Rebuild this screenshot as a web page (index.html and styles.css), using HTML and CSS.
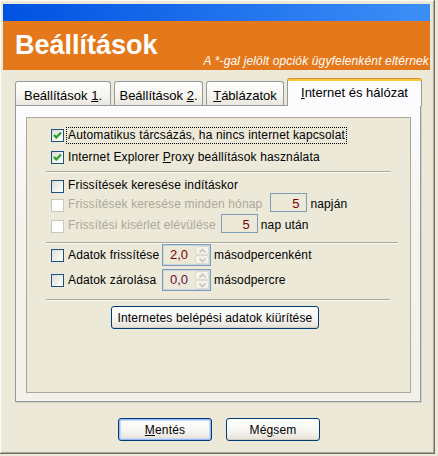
FILE: index.html
```html
<!DOCTYPE html>
<html lang="hu">
<head>
<meta charset="utf-8">
<title>Beállítások</title>
<link rel="stylesheet" href="styles.css">
</head>
<body>
<div class="window">
  <div class="titlebar"></div>
  <div class="header">
    <div class="title">Beállítások</div>
    <div class="subtitle">A *-gal jelölt opciók ügyfelenként eltérnek</div>
  </div>
  <div class="tabs">
    <div class="tab tab1">Beállítások <u>1</u>.</div>
    <div class="tab tab2">Beállítások <u>2</u>.</div>
    <div class="tab tab3"><u>T</u>áblázatok</div>
    <div class="tab active"><u>I</u>nternet és hálózat</div>
  </div>
  <div class="page">
    <div class="inner">
      <div class="row r1">
        <span class="cb"><svg width="11" height="11" viewBox="0 0 11 11"><polyline points="2,5 4.3,7.5 9,2.5" fill="none" stroke="#21a121" stroke-width="2.2"/></svg></span>
        <span class="label focus">Automatikus tárcsázás, ha nincs internet kapcsolat</span>
      </div>
      <div class="row r2">
        <span class="cb"><svg width="11" height="11" viewBox="0 0 11 11"><polyline points="2,5 4.3,7.5 9,2.5" fill="none" stroke="#21a121" stroke-width="2.2"/></svg></span>
        <span class="label">Internet Explorer <u>P</u>roxy beállítások használata</span>
      </div>
      <div class="sep s1"></div>
      <div class="row r3">
        <span class="cb"></span>
        <span class="label">Frissítések keresése indításkor</span>
      </div>
      <div class="row r4">
        <span class="cb disabled"></span>
        <span class="label dis">Frissítések keresése minden hónap</span>
        <span class="numbox nb1">5</span>
        <span class="after">napján</span>
      </div>
      <div class="row r5">
        <span class="cb disabled"></span>
        <span class="label dis">Frissítési kisérlet elévülése</span>
        <span class="numbox nb2">5</span>
        <span class="after">nap után</span>
      </div>
      <div class="sep s2"></div>
      <div class="row r6">
        <span class="cb"></span>
        <span class="label fixed">Adatok frissítése</span>
        <span class="spin"><span class="val">2,0</span><span class="arrows"><span class="arr"><svg width="9" height="6" viewBox="0 0 9 6"><polyline points="1.5,4.5 4.5,1.5 7.5,4.5" fill="none" stroke="#c9c6b8" stroke-width="1.6"/></svg></span><span class="arr"><svg width="9" height="6" viewBox="0 0 9 6"><polyline points="1.5,1.5 4.5,4.5 7.5,1.5" fill="none" stroke="#c9c6b8" stroke-width="1.6"/></svg></span></span></span>
        <span class="after">másodpercenként</span>
      </div>
      <div class="row r7">
        <span class="cb"></span>
        <span class="label fixed">Adatok zárolása</span>
        <span class="spin"><span class="val v2">0,0</span><span class="arrows"><span class="arr"><svg width="9" height="6" viewBox="0 0 9 6"><polyline points="1.5,4.5 4.5,1.5 7.5,4.5" fill="none" stroke="#c9c6b8" stroke-width="1.6"/></svg></span><span class="arr"><svg width="9" height="6" viewBox="0 0 9 6"><polyline points="1.5,1.5 4.5,4.5 7.5,1.5" fill="none" stroke="#c9c6b8" stroke-width="1.6"/></svg></span></span></span>
        <span class="after">másodpercre</span>
      </div>
      <div class="sep s3"></div>
      <div class="btnrow">
        <button class="btn wide">Internetes belépési adatok kiürítése</button>
      </div>
    </div>
  </div>
  <div class="buttons">
    <button class="btn dlg default"><u>M</u>entés</button>
    <button class="btn dlg">Mé<u>g</u>sem</button>
  </div>
</div>
</body>
</html>
```
FILE: styles.css
```css
html, body {
  margin: 0;
  padding: 0;
}
body {
  width: 438px;
  height: 456px;
  overflow: hidden;
  background: #ece9d8;
  font-family: "Liberation Sans", Arial, sans-serif;
  font-size: 12px;
  color: #000;
}
.window {
  width: 435px;
  height: 454px;
  box-sizing: border-box;
  padding: 4px 4px 0 3px;
  background: #ece9d8;
  border-right: 1px solid #716f64;
  border-bottom: 1px solid #716f64;
  box-shadow: inset 1px 1px 0 #fbfaf6, inset -1px -1px 0 #aca899;
}
.titlebar {
  height: 17px;
  background: linear-gradient(to right, #0052e2, #3d8ff7);
}
.header {
  height: 49px;
  box-sizing: border-box;
  padding: 14px 1px 0 12px;
  background: #e5781a;
  color: #fff;
}
.title {
  font-size: 27px;
  font-weight: bold;
  line-height: 20px;
}
.subtitle {
  font-size: 12px;
  font-style: italic;
  line-height: 12px;
  letter-spacing: 0.15px;
  text-align: right;
}
.tabs {
  display: flex;
  align-items: flex-end;
  gap: 3px;
  height: 27px;
  margin-top: 8px;
  padding-left: 12px;
}
.tab {
  box-sizing: border-box;
  height: 24px;
  padding-top: 4px;
  font-size: 13px;
  line-height: 19px;
  text-align: center;
  white-space: nowrap;
  border: 1px solid #919b9c;
  border-bottom: none;
  border-radius: 3px 3px 0 0;
  background: linear-gradient(#fefefe, #f7f6f1 55%, #e9e7de);
}
.tab1 { width: 96px; }
.tab2 { width: 89px; }
.tab3 { width: 78px; }
.tab.active {
  position: relative;
  z-index: 1;
  width: 135px;
  height: 27px;
  margin-bottom: -1px;
  padding-top: 2px;
  border-top: 2px solid #ffc73c;
  box-shadow: 0 -1px 0 #e68b2c;
  background: #fcfcfe;
}
.page {
  width: 406px;
  height: 297px;
  margin-left: 12px;
  box-sizing: border-box;
  padding: 11px 9px 8px 10px;
  border: 1px solid #919b9c;
  background: linear-gradient(#fcfcfe, #f4f3ee 40%, #f2f1ec);
  box-shadow: 1px 1px 0 #d4d2c6;
}
.inner {
  width: 385px;
  height: 276px;
  box-sizing: border-box;
  border: 1px solid #aca899;
  background: #ece9d8;
}
.row {
  display: flex;
  align-items: center;
  padding-left: 24px;
  white-space: nowrap;
}
.r1 { margin-top: 6px; height: 22px; }
.r2 { height: 22px; }
.r3 { margin-top: 4px; height: 16px; align-items: flex-end; }
.r4 { height: 19px; align-items: flex-end; }
.r5 { margin-top: 2px; height: 19px; align-items: flex-end; }
.r6 { height: 22px; }
.r7 { margin-top: 3px; height: 22px; }
.cb {
  flex: none;
  width: 13px;
  height: 13px;
  box-sizing: border-box;
  border: 1px solid #1c5180;
  background: linear-gradient(135deg, #dcdcd5, #f6f6f3 70%, #fff);
  display: flex;
  align-items: center;
  justify-content: center;
}
.cb.disabled {
  border-color: #cac8bb;
  background: #fff;
}
.label {
  margin-left: 4px;
  line-height: 15px;
  letter-spacing: 0.15px;
}
.label.focus {
  margin-left: 2px;
  padding: 0 1px;
  border: 1px dotted #000;
}
.label.dis {
  color: #aca899;
}
.label.fixed {
  width: 94px;
}
.after {
  margin-left: 3px;
  line-height: 15px;
  letter-spacing: 0.15px;
}
.numbox {
  width: 37px;
  height: 19px;
  margin-left: 6px;
  box-sizing: border-box;
  border: 1px solid #7f9db9;
  background: #ece9d8;
  color: #800000;
  text-align: right;
  padding-right: 7px;
  line-height: 19px;
  font-size: 13px;
}
.nb1 { margin-left: 8px; }
.nb2 { margin-left: 5px; }
.sep {
  height: 0;
  margin-left: 19px;
  border-top: 1px solid #aca899;
  border-bottom: 1px solid #fbfaf5;
}
.s1 { margin-top: 3px; width: 345px; }
.s2 { margin-top: 9px; width: 352px; }
.s3 { margin-top: 8px; width: 344px; }
.spin {
  display: flex;
  width: 49px;
  height: 22px;
  box-sizing: border-box;
  border: 1px solid #7f9db9;
  box-shadow: inset 0 0 0 1px #c6d3e0;
  background: #ece9d8;
  padding: 1px;
}
.spin .val {
  flex: 1;
  text-align: right;
  padding-right: 7px;
  line-height: 18px;
  font-size: 13px;
  color: #800000;
}
.spin .val.v2 { color: #6a0c38; }
.arrows {
  display: flex;
  flex-direction: column;
  width: 14px;
}
.arr {
  flex: 1;
  display: flex;
  align-items: center;
  justify-content: center;
  border: 1px solid #dedbd0;
  border-radius: 2px;
  background: #f3f2ec;
}
.btnrow {
  margin-top: 5px;
  padding-left: 84px;
}
.btn {
  box-sizing: border-box;
  height: 23px;
  padding: 0;
  font-family: "Liberation Sans", Arial, sans-serif;
  font-size: 12px;
  letter-spacing: 0.15px;
  color: #000;
  border: 1px solid #003c74;
  border-radius: 3px;
  background: linear-gradient(#ffffff, #f5f4ef 60%, #e3e0d6);
  box-shadow: inset 0 -1px 0 #d6d0c5;
}
.btn.wide { width: 208px; }
.buttons {
  display: flex;
  justify-content: center;
  gap: 14px;
  margin-top: 16px;
  padding-left: 5px;
}
.btn.dlg { width: 94px; }
.btn.default {
  box-shadow: inset 0 0 0 1px #9ab8ef, inset 0 0 0 2px #c9daf8;
}
```
